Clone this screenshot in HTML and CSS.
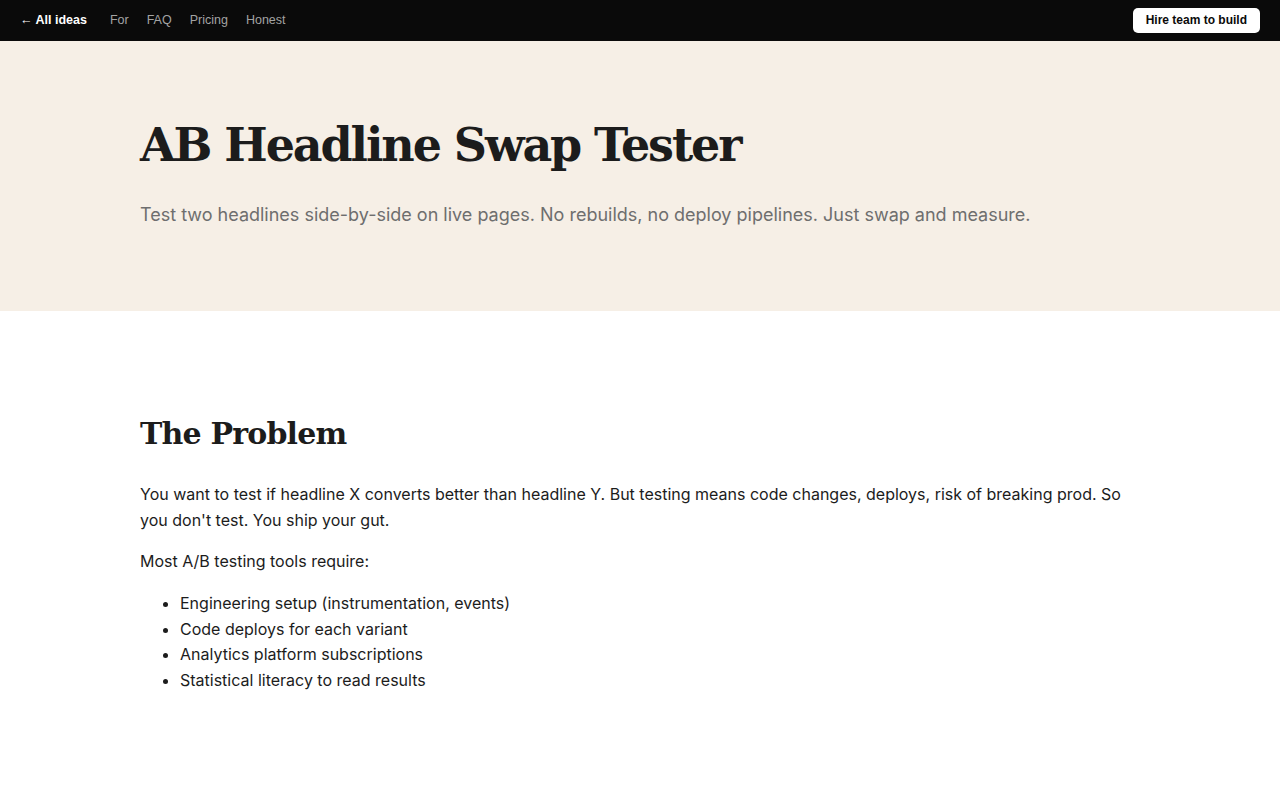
FILE: index.html
```html
<!DOCTYPE html>
<html lang="en">

<head>
      <meta charset="UTF-8">
      <meta name="viewport" content="width=device-width, initial-scale=1.0">
      <title>AB Headline Swap Tester</title>
      <link rel="stylesheet" href="styles.css">
</head>

<body>
      <nav class="topbar">
            <div class="nav-links">
                  <a href="#" class="back">&larr; All ideas</a>
                  <a href="#">For</a>
                  <a href="#">FAQ</a>
                  <a href="#">Pricing</a>
                  <a href="#">Honest</a>
            </div>
            <a href="#" class="hire">Hire team to build</a>
      </nav>

      <header class="hero">
            <div class="wrap">
                  <h1>AB Headline Swap Tester</h1>
                  <p class="lead">Test two headlines side-by-side on live pages. No rebuilds, no deploy pipelines. Just swap and measure.</p>
            </div>
      </header>

      <section class="problem">
            <div class="wrap">
                  <h2>The Problem</h2>
                  <p>You want to test if headline X converts better than headline Y. But testing means code changes, deploys, risk of breaking prod. So you don't test. You ship your gut.</p>
                  <p>Most A/B testing tools require:</p>
                  <ul>
                        <li>Engineering setup (instrumentation, events)</li>
                        <li>Code deploys for each variant</li>
                        <li>Analytics platform subscriptions</li>
                        <li>Statistical literacy to read results</li>
                  </ul>
            </div>
      </section>
</body>

</html>
```

FILE: styles.css
```css
* {
      box-sizing: border-box;
}

body {
      margin: 0;
      padding: 0;
      font-family: Inter, "Noto Sans", sans-serif;
      color: #1c1c1c;
      background: #ffffff;
}

a {
      text-decoration: none;
}

.topbar {
      height: 41px;
      background-color: #0a0a0a;
      display: flex;
      align-items: center;
      justify-content: space-between;
      padding: 0 20px;
      font-family: "Liberation Sans", Arial, sans-serif;
      font-size: 12.5px;
}

.nav-links {
      display: flex;
      align-items: center;
      gap: 18px;
      margin-top: -2px;
}

.nav-links a {
      color: #a3a3a3;
}

.nav-links .back {
      color: #ffffff;
      font-weight: bold;
      margin-right: 5px;
}

.hire {
      background-color: #ffffff;
      color: #0a0a0a;
      font-weight: bold;
      font-size: 12px;
      padding: 5px 13px 6px;
      border-radius: 5px;
      margin-top: -1px;
}

.wrap {
      width: 1000px;
      margin: 0 auto;
}

.hero {
      background-color: #f6efe6;
      height: 270px;
      padding-top: 76px;
}

h1,
h2 {
      font-family: "DejaVu Serif", "Liberation Serif", serif;
      font-weight: bold;
      color: #1c1c1c;
      margin: 0;
}

h1 {
      font-size: 46px;
      letter-spacing: -2.1px;
      line-height: 56px;
}

.lead {
      margin: 31px 0 0;
      font-size: 18px;
      color: #6e6e6e;
}

.problem {
      padding-top: 103px;
}

h2 {
      font-size: 30px;
      letter-spacing: -0.8px;
      line-height: 40px;
      margin-bottom: 27px;
}

.problem p {
      font-size: 16px;
      line-height: 26px;
      margin: 0 0 15px;
}

.problem ul {
      margin: 17px 0 0;
      padding-left: 40px;
      font-size: 16px;
      line-height: 25.7px;
}
```
